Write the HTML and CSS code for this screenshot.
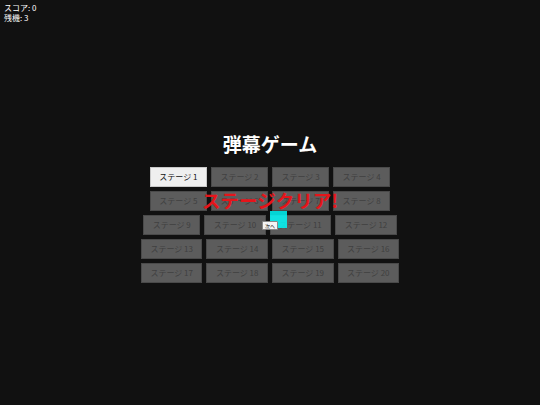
FILE: index.html
```html
<!DOCTYPE html>
<html lang="ja">
<head>
<meta charset="utf-8">
<title>弾幕ゲーム</title>
<link rel="stylesheet" href="styles.css">
</head>
<body>
<div class="hud">
  <div>スコア: 0</div>
  <div>残機: 3</div>
</div>
<main class="menu">
  <h1 class="title">弾幕ゲーム</h1>
  <div class="stages">
    <button class="stage unlocked">ステージ 1</button>
    <button class="stage" disabled>ステージ 2</button>
    <button class="stage" disabled>ステージ 3</button>
    <button class="stage" disabled>ステージ 4</button>
    <button class="stage" disabled>ステージ 5</button>
    <button class="stage" disabled>ステージ 6</button>
    <button class="stage" disabled>ステージ 7</button>
    <button class="stage" disabled>ステージ 8</button>
    <button class="stage" disabled>ステージ 9</button>
    <button class="stage" disabled>ステージ 10</button>
    <button class="stage" disabled>ステージ 11</button>
    <button class="stage" disabled>ステージ 12</button>
    <button class="stage" disabled>ステージ 13</button>
    <button class="stage" disabled>ステージ 14</button>
    <button class="stage" disabled>ステージ 15</button>
    <button class="stage" disabled>ステージ 16</button>
    <button class="stage" disabled>ステージ 17</button>
    <button class="stage" disabled>ステージ 18</button>
    <button class="stage" disabled>ステージ 19</button>
    <button class="stage" disabled>ステージ 20</button>
  </div>
</main>
<div class="clear">ステージクリア!</div>
<div class="player"></div>
<button class="next">次へ</button>
</body>
</html>
```
FILE: styles.css
```css
html, body {
  margin: 0;
  padding: 0;
}
body {
  width: 540px;
  height: 405px;
  overflow: hidden;
  background: #111111;
  color: #ffffff;
  font-family: "Noto Sans CJK JP", "Noto Sans", sans-serif;
  position: relative;
}
.hud {
  padding: 3px 4px;
  font-size: 8px;
  line-height: 10px;
  height: 20px;
}
.menu {
  display: flex;
  flex-direction: column;
  align-items: center;
}
.title {
  margin: 105px 0 0;
  font-size: 19px;
  line-height: 26px;
  font-weight: bold;
  color: #ffffff;
}
.stages {
  width: 280px;
  margin-top: 10px;
  display: flex;
  flex-wrap: wrap;
  justify-content: center;
  gap: 4px;
}
.stage {
  font-family: "Noto Sans CJK JP", "Noto Sans", sans-serif;
  font-size: 8px;
  line-height: 10px;
  height: 20px;
  padding: 0 8.5px;
  border: 1px solid #4a4a4a;
  background: #5c5c5c;
  color: #404040;
  border-radius: 0;
  margin: 0;
}
.stage.unlocked {
  background: #efefef;
  color: #111111;
  border-color: #c8c8c8;
}
.clear {
  position: absolute;
  left: 0;
  right: 0;
  top: 187px;
  text-align: center;
  font-size: 18.5px;
  line-height: 26px;
  font-weight: bold;
  color: #e5141a;
}
.player {
  position: absolute;
  left: 270px;
  top: 211px;
  width: 17px;
  height: 17px;
  background: rgba(0, 255, 255, 0.82);
}
.next {
  position: absolute;
  left: 262px;
  top: 221px;
  width: 16px;
  height: 9px;
  padding: 0;
  margin: 0;
  border: 1px solid #888;
  border-radius: 1px;
  background: #f4f4f4;
  color: #111;
  font-family: "Noto Sans CJK JP", sans-serif;
  font-size: 5px;
  line-height: 7px;
}
```
